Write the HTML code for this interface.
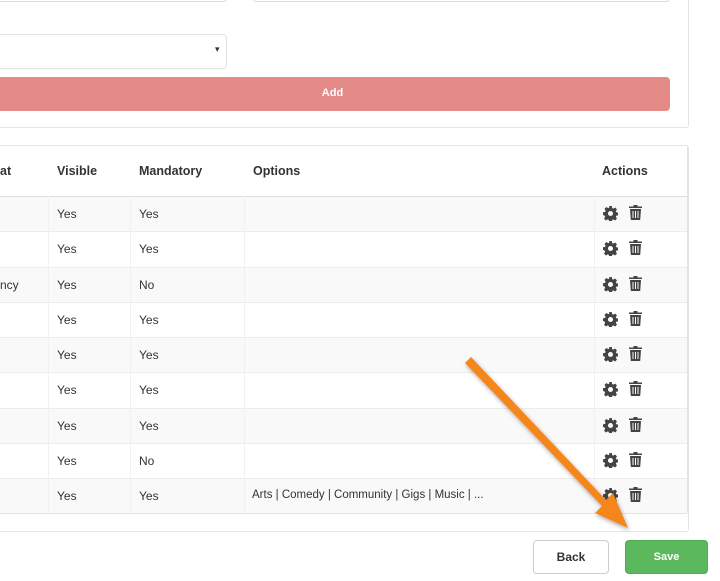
<!DOCTYPE html>
<html><head><meta charset="utf-8"><style>
*{box-sizing:border-box;margin:0;padding:0}
body{width:720px;height:581px;overflow:hidden;background:#fff;font-family:"Liberation Sans",Arial,sans-serif;font-size:12px;color:#333;position:relative}
.abs{position:absolute}
.hl{position:absolute;height:1px;background:#e3e3e3}
.vl{position:absolute;width:1px;background:#f1f1f1}
.row{position:absolute;left:0;width:687px;height:35px}
.t{position:absolute;font-size:12px;color:#333}
.th{position:absolute;font-weight:bold;font-size:12.5px;color:#333;top:164px}
</style></head><body>
<div class="abs" style="left:-5px;top:-5px;width:694px;height:133px;border:1px solid #e5e5e5;border-radius:3px"></div>
<div class="abs" style="left:-5px;top:-10px;width:232px;height:12px;border:1px solid #ddd;border-radius:4px"></div>
<div class="abs" style="left:252px;top:-10px;width:418px;height:12px;border:1px solid #ddd;border-radius:4px"></div>
<div class="abs" style="left:-5px;top:34px;width:232px;height:35px;border:1px solid #dfe5df;border-radius:4px"></div>
<div class="abs" style="left:215px;top:44px;font-size:9px">&#9662;</div>
<div class="abs" style="left:-5px;top:77px;width:675px;height:34px;background:#e48b88;border-radius:4px;color:#fff;font-weight:bold;font-size:11px;text-align:center;line-height:33px">Add</div>
<div class="abs" style="left:-5px;top:145px;width:694px;height:387px;border:1px solid #e5e5e5;border-radius:3px"></div>
<div class="th" style="left:0">at</div>
<div class="th" style="left:57px">Visible</div>
<div class="th" style="left:139px">Mandatory</div>
<div class="th" style="left:253px">Options</div>
<div class="th" style="left:602px">Actions</div>
<div id="rows"></div>
<div class="hl" style="left:0;top:196px;width:687px;background:#ddd"></div>
<div class="hl" style="left:0;top:513px;width:687px"></div>
<div class="vl" style="left:48px;top:196px;height:317px"></div>
<div class="vl" style="left:130px;top:196px;height:317px"></div>
<div class="vl" style="left:244px;top:196px;height:317px"></div>
<div class="vl" style="left:594px;top:196px;height:317px"></div>
<div class="vl" style="left:687px;top:146px;height:367px;background:#e3e3e3"></div>
<div class="abs" style="left:533px;top:540px;width:76px;height:34px;border:1px solid #ccc;border-radius:4px;text-align:center;line-height:32px;font-weight:bold;font-size:12px">Back</div>
<div class="abs" style="left:625px;top:540px;width:83px;height:34px;background:#5cb85c;border:1px solid #4cae4c;border-radius:4px;text-align:center;line-height:32px;font-weight:bold;font-size:11px;color:#fff">Save</div>
<svg class="abs" style="left:0;top:0" width="720" height="581">
<defs><filter id="s" x="-20%" y="-20%" width="140%" height="140%"><feDropShadow dx="1" dy="2" stdDeviation="2" flood-opacity="0.35"/></filter></defs>
<g filter="url(#s)" fill="#f5861f">
<polygon points="465,363 471,357 606,500 613,493 628,528 595,513 602,506"/>
</g>
</svg>
<script>
var data=[["","Yes","Yes",""],["","Yes","Yes",""],["ncy","Yes","No",""],["","Yes","Yes",""],["","Yes","Yes",""],["","Yes","Yes",""],["","Yes","Yes",""],["","Yes","No",""],["","Yes","Yes","Arts | Comedy | Community | Gigs | Music | ..."]];
var tops=[196,231,267,302,337,372,408,443,478];
var gear='<svg width="15" height="15" viewBox="0 0 16 16"><path fill="#444" d="M6.6 0h2.8l.4 2.2 1.2.6 1.9-1.2 2 2-1.2 1.9.6 1.2 2.2.4v2.8l-2.2.4-.6 1.2 1.2 1.9-2 2-1.9-1.2-1.2.6-.4 2.2H6.6l-.4-2.2-1.2-.6-1.9 1.2-2-2 1.2-1.9-.6-1.2L0 9.4V6.6l2.2-.4.6-1.2-1.2-1.9 2-2 1.9 1.2 1.2-.6zM8 5.3A2.7 2.7 0 1 0 8 10.7 2.7 2.7 0 1 0 8 5.3z"/></svg>';
var trash='<svg width="13" height="15" viewBox="0 0 13 15"><path fill="#444" d="M4.5 0h4v1.5h4.5v1.5H0V1.5h4.5zM1 4h11l-.8 11H1.8zM3.5 6v7h1V6zm2.5 0v7h1V6zm2.5 0v7h1V6z"/></svg>';
var h='';
data.forEach(function(d,i){var y=tops[i];
h+='<div class="row" style="top:'+y+'px;height:'+((tops[i+1]||513)-y)+'px;background:'+(i%2==0?'#f9f9f9':'#fff')+'"></div>';
if(i>0)h+='<div class="hl" style="left:0;top:'+y+'px;width:687px;background:#ececec"></div>';
var ty=y+11;
h+='<div class="t" style="left:0;top:'+ty+'px">'+d[0]+'</div>';
h+='<div class="t" style="left:57px;top:'+ty+'px">'+d[1]+'</div>';
h+='<div class="t" style="left:139px;top:'+ty+'px">'+d[2]+'</div>';
h+='<div class="t" style="left:252px;top:'+ty+'px;font-size:11.5px">'+d[3]+'</div>';
h+='<div class="abs" style="left:603px;top:'+(y+10)+'px">'+gear+'</div>';
h+='<div class="abs" style="left:629px;top:'+(y+9)+'px">'+trash+'</div>';
});
document.getElementById('rows').innerHTML=h;
</script>
</body></html>
